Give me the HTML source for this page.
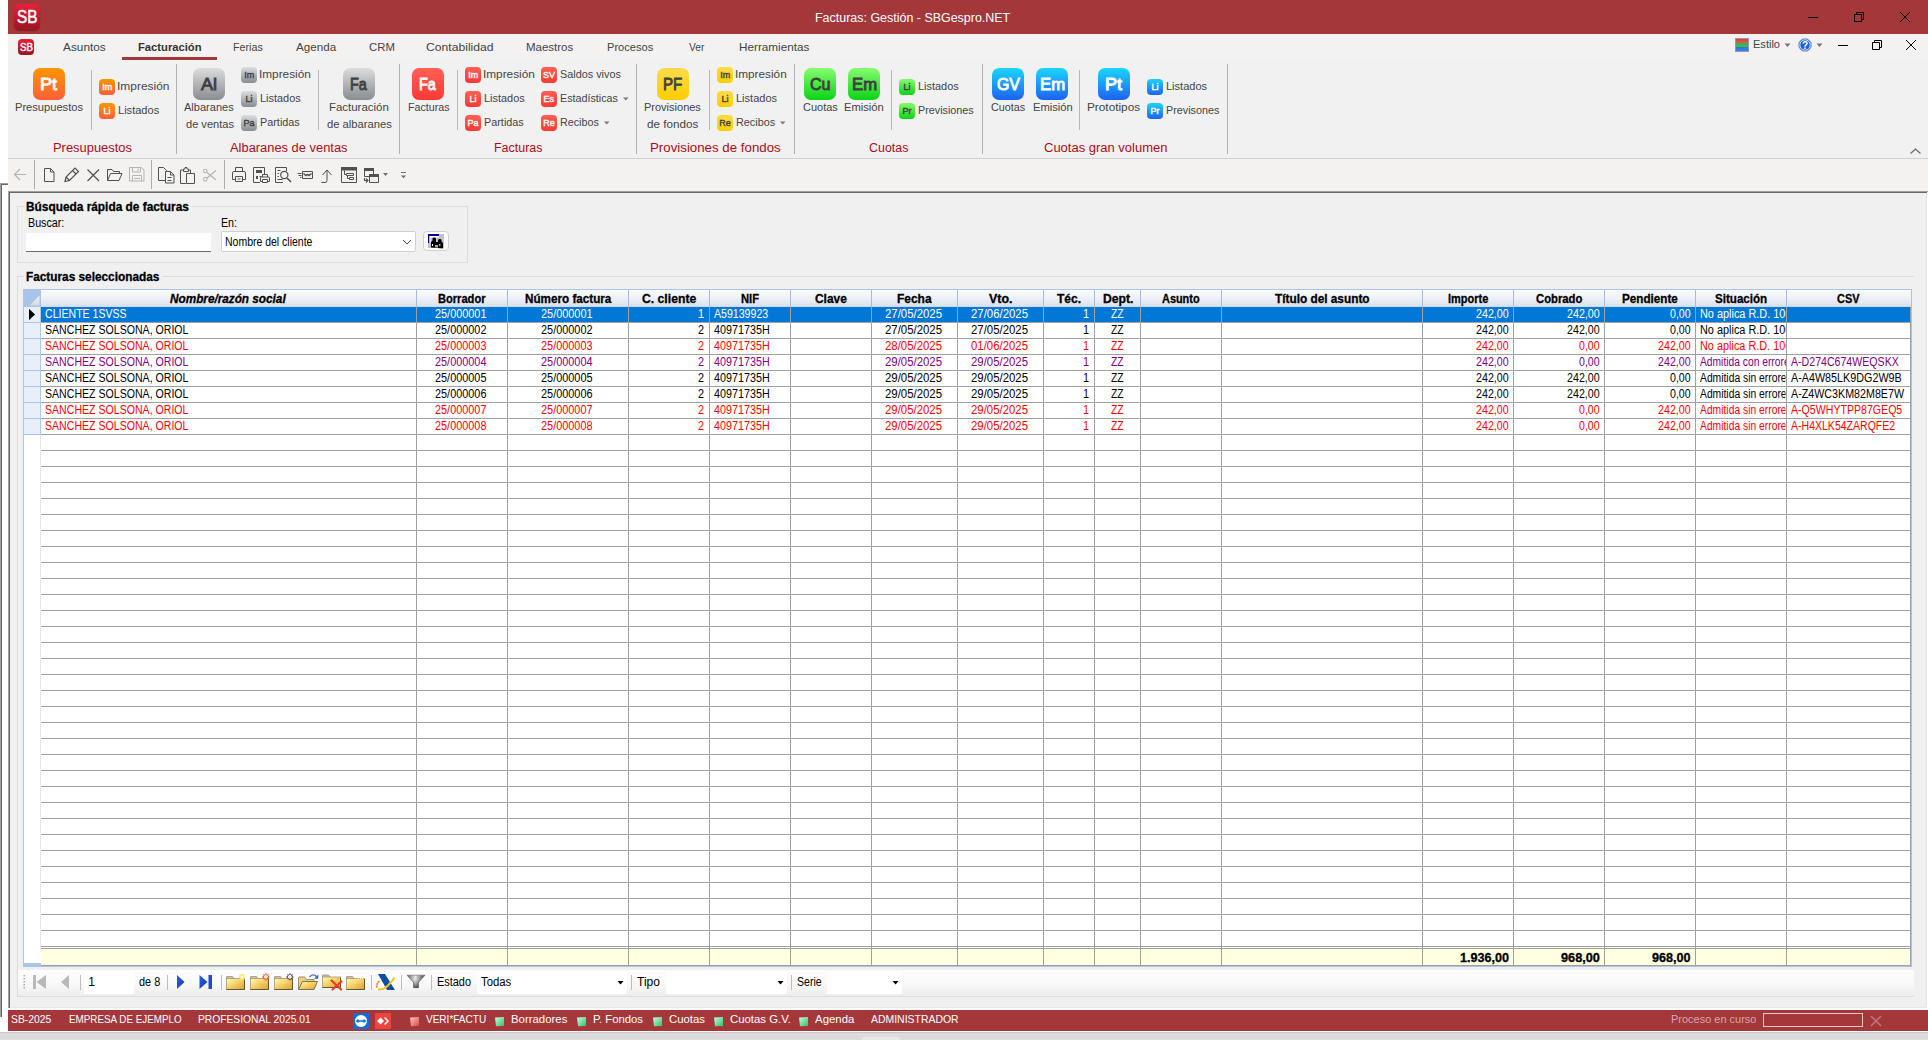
<!DOCTYPE html>
<html lang="es"><head><meta charset="utf-8"><title>Facturas: Gestión - SBGespro.NET</title>
<style>
html,body{margin:0;padding:0}
html{width:1928px;height:1040px;overflow:hidden}
body{width:1928px;height:1040px;position:relative;overflow:hidden;background:#fff;font-family:"Liberation Sans", sans-serif;}
.a{position:absolute;box-sizing:border-box}
.t{position:absolute;white-space:nowrap;line-height:16px;height:16px;transform-origin:0 50%;font-family:"Liberation Sans", sans-serif;font-size:11px}

.bi{position:absolute;width:32px;height:32px;border-radius:7px;top:68px}
.si{position:absolute;width:16px;height:16px;border-radius:4px}
.g-or{background:linear-gradient(#ff9500,#ff5e3a)}
.g-gy{background:linear-gradient(#dbddde,#898c90)}
.g-rd{background:linear-gradient(#ff6055,#ff3834)}
.g-yl{background:linear-gradient(#ffdb4c,#ffcd02)}
.g-gn{background:linear-gradient(#87fc70,#0bd318)}
.g-bl{background:linear-gradient(#1ad6fd,#1d62f0)}
.vs{position:absolute;width:1px;background:#b3b0ad}
.vi{position:absolute;width:1px;background:#b9b6b3;top:70px;height:60px}
svg{position:absolute;overflow:visible}

</style></head><body>
<div class="a" style="left:0px;top:183px;width:8px;height:1px;background:#a0a0a0;"></div>
<div class="a" style="left:1px;top:184px;width:7px;height:1px;background:#696969;"></div>
<div class="a" style="left:0px;top:183px;width:1px;height:834px;background:#a0a0a0;"></div>
<div class="a" style="left:1px;top:184px;width:1px;height:833px;background:#696969;"></div>
<div class="a" style="left:0px;top:1032px;width:1928px;height:8px;background:#dcdcdc;"></div>
<div class="a" style="left:0px;top:1032px;width:1928px;height:1px;background:#c6c6c6;"></div>
<div class="a" style="left:8px;top:1031px;width:1920px;height:1px;background:#ffffff;"></div>
<div class="a" style="left:862px;top:1037px;width:38px;height:3px;background:#e9e9e9;border-radius:3px 3px 0 0"></div>
<div class="a" style="left:8px;top:0px;width:1920px;height:34px;background:#a4373a;"></div>
<div class="a" style="left:8px;top:34px;width:1920px;height:157px;background:#f3f2f1;"></div>
<div class="a" style="left:8px;top:59px;width:1920px;height:99px;background:#f1f1f1;"></div>
<div class="a" style="left:8px;top:158px;width:1920px;height:1px;background:#d0d0d0;"></div>
<div class="a" style="left:8px;top:191px;width:1920px;height:817px;background:#f0f0f0;"></div>
<div class="a" style="left:8px;top:191px;width:1920px;height:1px;background:#a0a0a0;"></div>
<div class="a" style="left:8px;top:191px;width:1px;height:817px;background:#a0a0a0;"></div>
<div class="a" style="left:9px;top:192px;width:1918px;height:1px;background:#696969;"></div>
<div class="a" style="left:9px;top:192px;width:1px;height:816px;background:#696969;"></div>
<div class="a" style="left:1926px;top:193px;width:1px;height:815px;background:#e3e3e3;"></div>
<div class="a" style="left:1927px;top:192px;width:1px;height:816px;background:#ffffff;"></div>
<div class="a" style="left:10px;top:1007px;width:1917px;height:1px;background:#e6e6e6;"></div>
<div class="a" style="left:8px;top:1008px;width:1920px;height:2px;background:#ffffff;"></div>
<div class="a" style="left:8px;top:1010px;width:1920px;height:21px;background:#a4373a;"></div>
<div class="a" style="left:14px;top:4px;width:26px;height:26px;border-radius:5px;background:linear-gradient(#e8213b,#9c1422);box-shadow:0 1px 1px rgba(60,0,0,.4)"></div>
<svg style="left:1800px;top:8px" width="120" height="20" viewBox="1800 8 120 20" fill="none" stroke="#000" stroke-width="1"><path d="M1808 17.5H1818"/><path d="M1854.5 14.5h7v7h-7z"/><path d="M1856.5 14.5v-2h7v7h-2"/><path d="M1900 12L1910 22M1910 12L1900 22"/></svg>
<div class="a" style="left:18px;top:39px;width:16px;height:16px;border-radius:4px;background:linear-gradient(#e8213b,#9c1422)"></div>
<div class="a" style="left:122px;top:57px;width:95px;height:3px;background:#a4373a;"></div>
<div class="a" style="left:1735px;top:38px;width:14px;height:14px;border:1px solid #8a9bb5;background:linear-gradient(#e03c31 0,#e35d4f 33%,#2fb344 33%,#39c04c 66%,#2f6fe0 66%,#3b82f0 100%)"></div>
<svg style="left:1780px;top:36px" width="148" height="20" viewBox="1780 36 148 20"><path d="M1784.5 43.5h6l-3 3.5z" fill="#777"/><path d="M1816.5 43.5h6l-3 3.5z" fill="#777"/><circle cx="1805" cy="45" r="6.5" fill="#1f5fd0" stroke="#9db8ea" stroke-width="1"/><circle cx="1805" cy="45" r="5.2" fill="none" stroke="#fff" stroke-width="0.8"/><g fill="none" stroke="#000" stroke-width="1"><path d="M1838 45.5H1848"/><path d="M1872.5 42.5h7v7h-7z"/><path d="M1874.5 42.5v-2h7v7h-2"/><path d="M1906 40L1916 50M1916 40L1906 50"/></g></svg>
<svg style="left:1908px;top:147px" width="16" height="10" viewBox="1908 147 16 10"><path d="M1910.5 153.5l5-4.5l5 4.5" fill="none" stroke="#666" stroke-width="1.2"/></svg>
<div class="bi g-or" style="left:33px"></div>
<div class="vi" style="left:91px"></div>
<div class="si g-or" style="left:99px;top:79px"></div>
<div class="si g-or" style="left:99px;top:103px"></div>
<div class="vs" style="left:176px;top:64px;height:90px"></div>
<div class="bi g-gy" style="left:193px"></div>
<div class="si g-gy" style="left:241px;top:67px"></div>
<div class="si g-gy" style="left:241px;top:91px"></div>
<div class="si g-gy" style="left:241px;top:115px"></div>
<div class="vi" style="left:318px"></div>
<div class="bi g-gy" style="left:343px"></div>
<div class="vs" style="left:399px;top:64px;height:90px"></div>
<div class="bi g-rd" style="left:412px"></div>
<div class="vi" style="left:457px"></div>
<div class="si g-rd" style="left:465px;top:67px"></div>
<div class="si g-rd" style="left:465px;top:91px"></div>
<div class="si g-rd" style="left:465px;top:115px"></div>
<div class="si g-rd" style="left:541px;top:67px"></div>
<div class="si g-rd" style="left:541px;top:91px"></div>
<svg style="left:623px;top:97px" width="6" height="4" viewBox="0 0 6 4"><path d="M0 0.5h5.5l-2.75 3z" fill="#777"/></svg>
<div class="si g-rd" style="left:541px;top:115px"></div>
<svg style="left:604px;top:121px" width="6" height="4" viewBox="0 0 6 4"><path d="M0 0.5h5.5l-2.75 3z" fill="#777"/></svg>
<div class="vs" style="left:636px;top:64px;height:90px"></div>
<div class="bi g-yl" style="left:657px"></div>
<div class="vi" style="left:709px"></div>
<div class="si g-yl" style="left:717px;top:67px"></div>
<div class="si g-yl" style="left:717px;top:91px"></div>
<div class="si g-yl" style="left:717px;top:115px"></div>
<svg style="left:780px;top:121px" width="6" height="4" viewBox="0 0 6 4"><path d="M0 0.5h5.5l-2.75 3z" fill="#777"/></svg>
<div class="vs" style="left:794px;top:64px;height:90px"></div>
<div class="bi g-gn" style="left:804px"></div>
<div class="bi g-gn" style="left:848px"></div>
<div class="vi" style="left:891px"></div>
<div class="si g-gn" style="left:899px;top:79px"></div>
<div class="si g-gn" style="left:899px;top:103px"></div>
<div class="vs" style="left:982px;top:64px;height:90px"></div>
<div class="bi g-bl" style="left:992px"></div>
<div class="bi g-bl" style="left:1036px"></div>
<div class="vi" style="left:1079px"></div>
<div class="bi g-bl" style="left:1098px"></div>
<div class="si g-bl" style="left:1147px;top:79px"></div>
<div class="si g-bl" style="left:1147px;top:103px"></div>
<div class="vs" style="left:1227px;top:64px;height:90px"></div>
<svg style="left:8px;top:159px" width="420" height="32" viewBox="8 159 420 32"><path d="M34.5 160V189" stroke="#aeaba8" stroke-width="1"/><path d="M151.5 160V189" stroke="#aeaba8" stroke-width="1"/><path d="M224.5 160V189" stroke="#aeaba8" stroke-width="1"/><path d="M14.5 174.5H26 M20 169L14.5 174.5L20 180" stroke="#b4b4b4" fill="none" stroke-width="1.2" /><path d="M44.5 168.5h6l3.5 3.5v9.5h-9.5z M50.5 168.5v3.5h3.5" stroke="#505050" fill="none" stroke-width="1" /><path d="M65 181.5l1-4.5l9-9l3.5 3.5l-9 9z M72.5 170.5l3.5 3.5 M66 177l3.5 3.5" stroke="#505050" fill="none" stroke-width="1.2" /><path d="M87.5 169.5L99 181 M99 169.5L87.5 181" stroke="#505050" fill="none" stroke-width="1.2" /><path d="M107.5 180.5v-11h4.5l1.5 2h6v2.5 M107.5 180.5l3-7h11.5l-3 7z" stroke="#505050" fill="none" stroke-width="1" /><path d="M129.5 167.5h12l2.5 2.5v11h-14.5z M132.5 167.5v4.5h8v-4.5 M132.5 181v-5.5h9v5.5 M134 178.5h6 M138 168.5v2.5" stroke="#b4b4b4" fill="none" stroke-width="1" /><path d="M165 180.5h-6.5v-13h5l3 3v1" stroke="#505050" fill="none" stroke-width="1" /><path d="M165.5 171.5h5l3.5 3.5v8h-8.5z M170.5 171.5v3.5h3.5 M167.5 177.5h4 M167.5 180.5h4" stroke="#505050" fill="none" stroke-width="1" /><path d="M186 183.5h-5.500v-13.5h2.500 M188 170h2.500v3 M183.500 171.500v-2.500h1.500v-1.500h2v1.500h1.500v2.500z" stroke="#505050" fill="none" stroke-width="1" /><path d="M186.500 173.500h8v10h-8z" stroke="#505050" fill="none" stroke-width="1" /><path d="M207 172.500L216 180 M207 178L216 170.500" stroke="#b4b4b4" fill="none" stroke-width="1.2" /><circle cx="205.3" cy="171" r="1.8" fill="none" stroke="#b4b4b4" stroke-width="1.1"/><circle cx="205.3" cy="179.300" r="1.8" fill="none" stroke="#b4b4b4" stroke-width="1.1"/><path d="M235.500 171.500v-4h7v4 M235.500 179.500h-3v-6.500a1.500 1.500 0 0 1 1.500 -1.500h10a1.500 1.500 0 0 1 1.500 1.500v6.500h-3 M235.500 176.500h7v5h-7z M237.500 179h3" stroke="#505050" fill="none" stroke-width="1" /><path d="M260 182.500h-6.500v-15h11v7" stroke="#505050" fill="none" stroke-width="1" /><path d="M256 170h6v3h-6z" stroke="none" fill="#505050" stroke-width="1" /><path d="M256 176h2v3h-2z" stroke="none" fill="#505050" stroke-width="1" /><path d="M259.500 176.500h2" stroke="#505050" fill="none" stroke-width="1" /><path d="M262.500 177v-2.500h5v2.500 M262.500 181.500h-2v-3.500a1 1 0 0 1 1 -1h7a1 1 0 0 1 1 1v3.500h-2 M262.500 179.500h5v3h-5z" stroke="#505050" fill="none" stroke-width="1" /><path d="M283 182.500h-7.500v-15h11v3.500" stroke="#505050" fill="none" stroke-width="1" /><path d="M277.500 170.500h3 M277.500 173.500h1.500 M277.500 176.500h1.500 M277.500 179.500h5" stroke="#505050" fill="none" stroke-width="1" /><circle cx="284.300" cy="175" r="3.600" fill="none" stroke="#505050" stroke-width="1.200"/><path d="M287 178L291 182" stroke="#505050" fill="none" stroke-width="1.6" /><path d="M302.500 171.500h10v7h-10z" stroke="#505050" fill="none" stroke-width="1" /><path d="M303.500 173.500l2.500 2l1.500 -1l1.500 1l2.500 -2" stroke="#505050" fill="none" stroke-width="1.5" /><path d="M297.500 173.500h4 M298.500 175.500h3 M300 177.500h1.500" stroke="#505050" fill="none" stroke-width="1" /><path d="M321.500 182.500h3.500a2 2 0 0 0 2 -2v-10 M322.500 175l4.500 -5l4.500 5" stroke="#505050" fill="none" stroke-width="1" /><path d="M341.500 167.500h15v15h-15z" stroke="#505050" fill="none" stroke-width="1" /><path d="M341 167h16v3.500h-16z" stroke="none" fill="#505050" stroke-width="1" /><path d="M344.500 170.500v4h2 M346.500 173.500h7v2h-7z M347.500 175.500v3h2 M349.500 177.500h4v2h-4z" stroke="#505050" fill="none" stroke-width="1" /><path d="M364.500 168.500h9v8h-9z" stroke="#505050" fill="none" stroke-width="1" /><path d="M364 168h10v3h-10z" stroke="none" fill="#505050" stroke-width="1" /><path d="M369.500 174.500h9v8h-9z" stroke="#505050" fill="#f3f2f1" stroke-width="1" /><path d="M369 174h10v3h-10z" stroke="none" fill="#505050" stroke-width="1" /><path d="M364.500 178v2.500h3 M366 178.500l2 2l-2 2" stroke="#505050" fill="none" stroke-width="1.1" /><path d="M383 173h5l-2.500 3z" stroke="none" fill="#6e6e6e" stroke-width="1" /><path d="M401 172.500h5" stroke="#6e6e6e" fill="none" stroke-width="1" /><path d="M401 175.500h5l-2.500 2.800z" stroke="none" fill="#6e6e6e" stroke-width="1" /></svg>
<div class="a" style="left:17px;top:206px;width:451px;height:57px;border:1px solid #dcdcdc"></div>
<div class="a" style="left:24px;top:203px;width:168px;height:10px;background:#f0f0f0;"></div>
<div class="a" style="left:26px;top:233px;width:185px;height:19px;background:#fff;border-bottom:1px solid #6e6e6e"></div>
<div class="a" style="left:221px;top:231px;width:195px;height:21px;background:#fff;border:1px solid #cfcfcf;border-radius:2px"></div>
<svg style="left:402px;top:238px" width="10" height="8" viewBox="402 238 10 8"><path d="M403 240l4 4l4 -4" fill="none" stroke="#444" stroke-width="1"/></svg>
<div class="a" style="left:423px;top:231px;width:26px;height:20px;background:#fdfdfd;border:1px solid #cfcfcf;border-radius:4px"></div>
<svg style="left:428px;top:234px" width="16" height="14" viewBox="428 234 16 14"><rect x="428" y="234" width="16" height="14" fill="#c0c0c0"/><rect x="429" y="236" width="10" height="7" fill="#fff"/><rect x="430.500" y="237.500" width="8.500" height="5.500" fill="#c0c0c0"/><rect x="428" y="234" width="11" height="2" fill="#00008b"/><rect x="428" y="234" width="1.300" height="9" fill="#00008b"/><path d="M431 247.500v-5.500l1.500 -1.500v-2l1 -1h1.500l1 1v3.500h2v-2l1 -1h1.500l1 1v1.500l1.500 1.500v5.500z" fill="#000"/><rect x="435" y="245" width="3" height="2.500" fill="#b5b52a"/><rect x="432" y="244" width="1" height="2" fill="#fff"/><rect x="439.300" y="244" width="1" height="2" fill="#fff"/></svg>
<div class="a" style="left:17px;top:276px;width:1897px;height:721px;border:1px solid #dcdcdc;border-right:none"></div>
<div class="a" style="left:24px;top:272px;width:138px;height:10px;background:#f0f0f0;"></div>
<div class="a" style="left:23px;top:289px;width:1889px;height:678px;background:#fff;border:1px solid #a9c4e9"></div>
<div class="a" style="left:41px;top:290px;width:1870px;height:17px;background:linear-gradient(#fafcfe,#eef2f8 45%,#dde3ee 90%,#cfd6e3)"></div>
<div class="a" style="left:24px;top:290px;width:17px;height:17px;background:#a9c4e9"></div>
<svg style="left:24px;top:290px" width="17" height="17" viewBox="0 0 17 17"><defs><linearGradient id="cg" x1="0" y1="0" x2="0" y2="1"><stop offset="0" stop-color="#f4f4f4"/><stop offset="1" stop-color="#d8d8d8"/></linearGradient></defs><path d="M15.500 5.500v10h-10z" fill="url(#cg)"/></svg>
<div class="a" style="left:416px;top:290px;width:1px;height:17px;background:#a6badf;"></div>
<div class="a" style="left:507px;top:290px;width:1px;height:17px;background:#a6badf;"></div>
<div class="a" style="left:628px;top:290px;width:1px;height:17px;background:#a6badf;"></div>
<div class="a" style="left:709px;top:290px;width:1px;height:17px;background:#a6badf;"></div>
<div class="a" style="left:790px;top:290px;width:1px;height:17px;background:#a6badf;"></div>
<div class="a" style="left:871px;top:290px;width:1px;height:17px;background:#a6badf;"></div>
<div class="a" style="left:957px;top:290px;width:1px;height:17px;background:#a6badf;"></div>
<div class="a" style="left:1043px;top:290px;width:1px;height:17px;background:#a6badf;"></div>
<div class="a" style="left:1094px;top:290px;width:1px;height:17px;background:#a6badf;"></div>
<div class="a" style="left:1140px;top:290px;width:1px;height:17px;background:#a6badf;"></div>
<div class="a" style="left:1221px;top:290px;width:1px;height:17px;background:#a6badf;"></div>
<div class="a" style="left:1422px;top:290px;width:1px;height:17px;background:#a6badf;"></div>
<div class="a" style="left:1513px;top:290px;width:1px;height:17px;background:#a6badf;"></div>
<div class="a" style="left:1604px;top:290px;width:1px;height:17px;background:#a6badf;"></div>
<div class="a" style="left:1695px;top:290px;width:1px;height:17px;background:#a6badf;"></div>
<div class="a" style="left:1786px;top:290px;width:1px;height:17px;background:#a6badf;"></div>
<div class="a" style="left:41px;top:307px;width:1870px;height:640px;background:repeating-linear-gradient(#fff 0,#fff 15px,#a0a0a0 15px,#a0a0a0 16px)"></div>
<div class="a" style="left:41px;top:307px;width:1870px;height:15px;background:#0078d7;"></div>
<div class="a" style="left:24px;top:307px;width:16px;height:128px;background:repeating-linear-gradient(#e9eff8 0,#e9eff8 15px,#a9c4e9 15px,#a9c4e9 16px)"></div>
<div class="a" style="left:40px;top:307px;width:1px;height:128px;background:#b4c8e6;"></div>
<div class="a" style="left:40px;top:435px;width:1px;height:514px;background:#e6e6e6;"></div>
<svg style="left:28px;top:308px" width="8" height="13" viewBox="0 0 8 13"><path d="M1 0.800L7 6.500L1 12.200z" fill="#000"/></svg>
<div class="a" style="left:41px;top:947px;width:1870px;height:1px;background:#fff;"></div>
<div class="a" style="left:41px;top:948px;width:1870px;height:1px;background:#a0a0a0;"></div>
<div class="a" style="left:41px;top:949px;width:1870px;height:16px;background:#ffffe1;"></div>
<div class="a" style="left:41px;top:965px;width:1870px;height:1px;background:#a0a0a0;"></div>
<div class="a" style="left:24px;top:963px;width:17px;height:3px;background:#a9c4e9;"></div>
<div class="a" style="left:416px;top:307px;width:1px;height:659px;background:#a0a0a0;"></div>
<div class="a" style="left:507px;top:307px;width:1px;height:659px;background:#a0a0a0;"></div>
<div class="a" style="left:628px;top:307px;width:1px;height:659px;background:#a0a0a0;"></div>
<div class="a" style="left:709px;top:307px;width:1px;height:659px;background:#a0a0a0;"></div>
<div class="a" style="left:790px;top:307px;width:1px;height:659px;background:#a0a0a0;"></div>
<div class="a" style="left:871px;top:307px;width:1px;height:659px;background:#a0a0a0;"></div>
<div class="a" style="left:957px;top:307px;width:1px;height:659px;background:#a0a0a0;"></div>
<div class="a" style="left:1043px;top:307px;width:1px;height:659px;background:#a0a0a0;"></div>
<div class="a" style="left:1094px;top:307px;width:1px;height:659px;background:#a0a0a0;"></div>
<div class="a" style="left:1140px;top:307px;width:1px;height:659px;background:#a0a0a0;"></div>
<div class="a" style="left:1221px;top:307px;width:1px;height:659px;background:#a0a0a0;"></div>
<div class="a" style="left:1422px;top:307px;width:1px;height:659px;background:#a0a0a0;"></div>
<div class="a" style="left:1513px;top:307px;width:1px;height:659px;background:#a0a0a0;"></div>
<div class="a" style="left:1604px;top:307px;width:1px;height:659px;background:#a0a0a0;"></div>
<div class="a" style="left:1695px;top:307px;width:1px;height:659px;background:#a0a0a0;"></div>
<div class="a" style="left:1786px;top:307px;width:1px;height:659px;background:#a0a0a0;"></div>
<div class="a" style="left:1910px;top:307px;width:1px;height:659px;background:#a0a0a0;"></div>
<div class="a" style="left:1911px;top:289px;width:1px;height:678px;background:#a9c4e9;"></div>
<div class="a" style="left:18px;top:970px;width:1896px;height:26px;background:linear-gradient(#fdfdfd,#f9f9f9 50%,#ededed)"></div>
<div class="a" style="left:84px;top:971px;width:50px;height:23px;background:#fff;"></div>
<div class="a" style="left:477px;top:972px;width:150px;height:22px;background:#fff;"></div>
<div class="a" style="left:666px;top:972px;width:121px;height:22px;background:#fff;"></div>
<div class="a" style="left:827px;top:972px;width:75px;height:22px;background:#fff;"></div>
<svg style="left:18px;top:970px" width="900" height="26" viewBox="18 970 900 26"><rect x="23.500" y="975" width="1.500" height="1.500" fill="#a8a8a8"/><rect x="23.500" y="978" width="1.500" height="1.500" fill="#a8a8a8"/><rect x="23.500" y="981" width="1.500" height="1.500" fill="#a8a8a8"/><rect x="23.500" y="984" width="1.500" height="1.500" fill="#a8a8a8"/><rect x="23.500" y="987" width="1.500" height="1.500" fill="#a8a8a8"/><path d="M80.5 975V990" stroke="#bdbdbd" stroke-width="1"/><path d="M167.5 975V990" stroke="#bdbdbd" stroke-width="1"/><path d="M221.5 975V990" stroke="#bdbdbd" stroke-width="1"/><path d="M371.5 975V990" stroke="#bdbdbd" stroke-width="1"/><path d="M401.5 975V990" stroke="#bdbdbd" stroke-width="1"/><path d="M431.5 975V990" stroke="#bdbdbd" stroke-width="1"/><path d="M631.5 975V990" stroke="#bdbdbd" stroke-width="1"/><path d="M791.5 975V990" stroke="#bdbdbd" stroke-width="1"/><rect x="33" y="975" width="3" height="14" fill="#b9b9b9"/><path d="M46 975v14l-9.500 -7z" stroke="none" fill="#b9b9b9" stroke-width="1" /><path d="M69 975v14l-8 -7z" stroke="none" fill="#b9b9b9" stroke-width="1" /><defs><linearGradient id="nb" x1="0" y1="0" x2="1" y2="1"><stop offset="0" stop-color="#2a5fe0"/><stop offset="1" stop-color="#1838b0"/></linearGradient></defs><path d="M177 975v14l7.500 -7z" stroke="none" fill="url(#nb)" stroke-width="1" /><path d="M199.500 975v14l8 -7z" stroke="none" fill="url(#nb)" stroke-width="1" /><rect x="208.500" y="975" width="3.500" height="14" fill="#2149c8"/><defs><linearGradient id="fo" x1="0" y1="0" x2="1" y2="1"><stop offset="0" stop-color="#fff6c8"/><stop offset="0.45" stop-color="#f5d56c"/><stop offset="1" stop-color="#d99f2e"/></linearGradient></defs><path d="M226.5 979v-2q0 -0.500 0.500 -0.500h5.500l2 2.500z" fill="#cbc3a2" stroke="#9a9378" stroke-width="0.800"/><rect x="226.5" y="978.5" width="18" height="11" fill="url(#fo)" stroke="#a89a62" stroke-width="0.800"/><path d="M226.5 989.5h18v-10.500" fill="none" stroke="#5f583f" stroke-width="1"/><path d="M250.5 979v-2q0 -0.500 0.500 -0.500h5.500l2 2.500z" fill="#cbc3a2" stroke="#9a9378" stroke-width="0.800"/><rect x="250.5" y="978.5" width="18" height="11" fill="url(#fo)" stroke="#a89a62" stroke-width="0.800"/><path d="M250.5 989.5h18v-10.500" fill="none" stroke="#5f583f" stroke-width="1"/><path d="M274.5 979v-2q0 -0.500 0.500 -0.500h5.500l2 2.500z" fill="#cbc3a2" stroke="#9a9378" stroke-width="0.800"/><rect x="274.5" y="978.5" width="18" height="11" fill="url(#fo)" stroke="#a89a62" stroke-width="0.800"/><path d="M274.5 989.5h18v-10.500" fill="none" stroke="#5f583f" stroke-width="1"/><path d="M346.5 979v-2q0 -0.500 0.500 -0.500h5.500l2 2.500z" fill="#cbc3a2" stroke="#9a9378" stroke-width="0.800"/><rect x="346.5" y="978.5" width="18" height="11" fill="url(#fo)" stroke="#a89a62" stroke-width="0.800"/><path d="M346.5 989.5h18v-10.500" fill="none" stroke="#5f583f" stroke-width="1"/><path d="M242 973.500v7M238.500 977h7M239.500 974.500l5 5M244.500 974.500l-5 5" stroke="#f6df55" stroke-width="1.200"/><rect x="240.500" y="975.500" width="3" height="3" fill="#fffbe0"/><path d="M266 973.500v7M262.500 977h7M263.500 974.500l5 5M268.500 974.500l-5 5" stroke="#e6352b" stroke-width="1.300" stroke-dasharray="1.600 1"/><rect x="264.500" y="975.500" width="2.500" height="3" fill="#fff1b0"/><path d="M290 973.500v7M286.500 977h7M287.500 974.500l5 5M292.500 974.500l-5 5" stroke="#4a2360" stroke-width="1.300" stroke-dasharray="1.600 1"/><rect x="288.500" y="975.500" width="2.500" height="3" fill="#fff1b0"/><path d="M358 978.500h1M360 978.500h1M362 978.500h1" stroke="#fff3bd" stroke-width="1"/><path d="M298.500 989.500v-12q0 -0.500 0.500 -0.500h5.500l2 2.500h7.500v3" fill="#ecd07a" stroke="#8d8668" stroke-width="0.900"/><path d="M298.500 989.500l4 -8h15l-3.500 8z" fill="url(#fo)" stroke="#6f6748" stroke-width="0.900"/><path d="M309.500 977q3.500 -4 7 -0.500" fill="none" stroke="#4a6fb5" stroke-width="1.400"/><path d="M318.300 974.500v4.300h-4.300z" fill="#3f64ad"/><path d="M322.500 977.500v-2q0 -0.500 0.500 -0.500h5.500l2 2.500z" fill="#cbc3a2" stroke="#9a9378" stroke-width="0.800"/><rect x="322.500" y="977" width="18" height="10.500" fill="url(#fo)" stroke="#a89a62" stroke-width="0.800"/><path d="M322.500 987.500h18v-10" fill="none" stroke="#5f583f" stroke-width="1"/><path d="M331.500 980.500l9.500 9M341.500 981.500l-9 8" stroke="#f03a22" stroke-width="2.200" stroke-linecap="round"/><rect x="376" y="973" width="20" height="18" fill="#fff"/><path d="M378 974h7l10 16h-8z" fill="#0b4ea2"/><path d="M378 989.500q6 0.500 10.500 -4.500t6 -7.500" fill="none" stroke="#f0c030" stroke-width="2"/><path d="M377 987.500q-1.200 -3.500 2.800 -7" fill="none" stroke="#f07028" stroke-width="1.600" stroke-dasharray="2 0.600"/><defs><linearGradient id="fg" x1="0" y1="0" x2="1" y2="0"><stop offset="0" stop-color="#555"/><stop offset="0.45" stop-color="#e8e8e8"/><stop offset="1" stop-color="#3c3c3c"/></linearGradient></defs><path d="M407 975.200h18l-6.500 7.300v5.200h-5v-5.200z" fill="url(#fg)" stroke="#666" stroke-width="0.600"/><linearGradient id="fv" x1="0" y1="0" x2="0" y2="1"><stop offset="0.350" stop-color="#000" stop-opacity="0"/><stop offset="1" stop-color="#000" stop-opacity="0.600"/></linearGradient><path d="M407 975.200h18l-6.500 7.300v5.200h-5v-5.200z" fill="url(#fv)"/><path d="M617.5 981h6l-3 3.500z" stroke="none" fill="#000" stroke-width="1" /><path d="M777.5 981h6l-3 3.500z" stroke="none" fill="#000" stroke-width="1" /><path d="M892.5 981h6l-3 3.500z" stroke="none" fill="#000" stroke-width="1" /></svg>
<div class="a" style="left:1763px;top:1013px;width:100px;height:14px;border:1px solid #e6c9ca"></div>
<svg style="left:8px;top:1010px" width="1920" height="21" viewBox="8 1010 1920 21"><rect x="353" y="1013" width="16" height="16" fill="#0e6fd8"/><circle cx="361" cy="1021" r="6" fill="#fff"/><path d="M355.500 1021l3 -2.300v1.500h5v-1.500l3 2.300l-3 2.300v-1.500h-5v1.500z" fill="#0e6fd8"/><rect x="375" y="1013" width="16" height="16" fill="#ef443b"/><path d="M377 1021l3.500 -3.500l3.500 3.500l-3.500 3.500z" fill="#fff"/><path d="M384.500 1017.500l3.500 3.500l-3.500 3.500" fill="none" stroke="#fff" stroke-width="1.500"/><defs><linearGradient id="sq1" x1="0" y1="0" x2="1" y2="1"><stop offset="0" stop-color="#ffc9c4"/><stop offset="1" stop-color="#d9483f"/></linearGradient><linearGradient id="sq2" x1="0" y1="0" x2="1" y2="1"><stop offset="0" stop-color="#c8ffdf"/><stop offset="1" stop-color="#2fbf6e"/></linearGradient></defs><path d="M410 1017.500l9 -0.500v9l-8 0.300z" fill="url(#sq1)"/><path d="M495 1017.500l9 -0.500v9l-8 0.300z" fill="url(#sq2)"/><path d="M577 1017.500l9 -0.500v9l-8 0.300z" fill="url(#sq2)"/><path d="M653 1017.500l9 -0.500v9l-8 0.300z" fill="url(#sq2)"/><path d="M714 1017.500l9 -0.500v9l-8 0.300z" fill="url(#sq2)"/><path d="M799 1017.500l9 -0.500v9l-8 0.300z" fill="url(#sq2)"/><path d="M1871 1016l10 10M1881 1016l-10 10" stroke="#b9787a" stroke-width="1.600"/></svg>
<span class="t" style="font-size:18px;color:#fff;-webkit-text-stroke:0.5px;transform:scaleX(0.8540);left:17.00px;top:9.00px;">SB</span>
<span class="t" style="font-size:12.5px;color:#fff;transform:scaleX(0.9966);left:815.40px;top:10.00px;">Facturas: Gestión - SBGespro.NET</span>
<span class="t" style="font-size:10px;color:#fff;-webkit-text-stroke:0.4px;transform:scaleX(0.9729);left:20.00px;top:40.00px;">SB</span>
<span class="t" style="font-size:11.5px;color:#444444;transform:scaleX(1.0286);left:63.00px;top:39.00px;">Asuntos</span>
<span class="t" style="font-size:11.5px;color:#333;font-weight:700;transform:scaleX(0.9746);left:137.50px;top:39.00px;">Facturación</span>
<span class="t" style="font-size:11.5px;color:#444444;transform:scaleX(0.9317);left:233.00px;top:39.00px;">Ferias</span>
<span class="t" style="font-size:11.5px;color:#444444;transform:scaleX(1.0123);left:296.25px;top:39.00px;">Agenda</span>
<span class="t" style="font-size:11.5px;color:#444444;transform:scaleX(0.9859);left:368.50px;top:39.00px;">CRM</span>
<span class="t" style="font-size:11.5px;color:#444444;transform:scaleX(1.0568);left:425.60px;top:39.00px;">Contabilidad</span>
<span class="t" style="font-size:11.5px;color:#444444;transform:scaleX(0.9991);left:526.25px;top:39.00px;">Maestros</span>
<span class="t" style="font-size:11.5px;color:#444444;transform:scaleX(0.9650);left:607.25px;top:39.00px;">Procesos</span>
<span class="t" style="font-size:11.5px;color:#444444;transform:scaleX(0.8892);left:688.50px;top:39.00px;">Ver</span>
<span class="t" style="font-size:11.5px;color:#444444;transform:scaleX(1.0192);left:739.40px;top:39.00px;">Herramientas</span>
<span class="t" style="font-size:11.5px;color:#444444;transform:scaleX(0.9594);left:1753.40px;top:36.00px;">Estilo</span>
<span class="t" style="font-size:10px;color:#fff;font-weight:700;transform:scaleX(1.0000);left:1802.00px;top:38.00px;">?</span>
<span class="t" style="font-size:16.5px;color:#fff;-webkit-text-stroke:0.85px;transform:scaleX(1.0929);left:40.01px;top:76.00px;">Pt</span>
<span class="t" style="font-size:11.5px;color:#444444;transform:scaleX(0.9671);left:15.25px;top:99.00px;">Presupuestos</span>
<span class="t" style="font-size:9px;color:#fff;-webkit-text-stroke:0.4px;transform:scaleX(1.0000);left:102.25px;top:79.00px;">Im</span>
<span class="t" style="font-size:11.5px;color:#444444;transform:scaleX(1.0388);left:116.96px;top:78.00px;">Impresión</span>
<span class="t" style="font-size:9px;color:#fff;-webkit-text-stroke:0.4px;transform:scaleX(1.0000);left:103.50px;top:103.00px;">Li</span>
<span class="t" style="font-size:11.5px;color:#444444;transform:scaleX(0.9609);left:118.00px;top:102.00px;">Listados</span>
<span class="t" style="font-size:12.5px;color:#ae0a18;transform:scaleX(1.0335);left:53.07px;top:140.00px;">Presupuestos</span>
<span class="t" style="font-size:16.5px;color:#404040;-webkit-text-stroke:0.85px;transform:scaleX(1.1000);left:201.35px;top:76.00px;">Al</span>
<span class="t" style="font-size:11.5px;color:#444444;transform:scaleX(0.9609);left:184.40px;top:99.00px;">Albaranes</span>
<span class="t" style="font-size:11.5px;color:#444444;transform:scaleX(0.9607);left:185.60px;top:116.00px;">de ventas</span>
<span class="t" style="font-size:9px;color:#404040;-webkit-text-stroke:0.4px;transform:scaleX(1.0000);left:244.25px;top:67.00px;">Im</span>
<span class="t" style="font-size:11.5px;color:#444444;transform:scaleX(1.0255);left:259.22px;top:66.00px;">Impresión</span>
<span class="t" style="font-size:9px;color:#404040;-webkit-text-stroke:0.4px;transform:scaleX(1.0000);left:245.50px;top:91.00px;">Li</span>
<span class="t" style="font-size:11.5px;color:#444444;transform:scaleX(0.9517);left:260.25px;top:90.00px;">Listados</span>
<span class="t" style="font-size:9px;color:#404040;-webkit-text-stroke:0.4px;transform:scaleX(1.0000);left:243.50px;top:115.00px;">Pa</span>
<span class="t" style="font-size:11.5px;color:#444444;transform:scaleX(0.9426);left:260.25px;top:114.00px;">Partidas</span>
<span class="t" style="font-size:16.5px;color:#404040;-webkit-text-stroke:0.85px;transform:scaleX(0.8753);left:350.07px;top:76.00px;">Fa</span>
<span class="t" style="font-size:11.5px;color:#444444;transform:scaleX(0.9943);left:329.40px;top:99.00px;">Facturación</span>
<span class="t" style="font-size:11.5px;color:#444444;transform:scaleX(0.9738);left:326.50px;top:116.00px;">de albaranes</span>
<span class="t" style="font-size:12.5px;color:#ae0a18;transform:scaleX(1.0311);left:230.25px;top:140.00px;">Albaranes de ventas</span>
<span class="t" style="font-size:16.5px;color:#fff;-webkit-text-stroke:0.85px;transform:scaleX(0.8753);left:419.07px;top:76.00px;">Fa</span>
<span class="t" style="font-size:11.5px;color:#444444;transform:scaleX(0.9314);left:407.50px;top:99.00px;">Facturas</span>
<span class="t" style="font-size:9px;color:#fff;-webkit-text-stroke:0.4px;transform:scaleX(1.0000);left:468.25px;top:67.00px;">Im</span>
<span class="t" style="font-size:11.5px;color:#444444;transform:scaleX(1.0255);left:483.37px;top:66.00px;">Impresión</span>
<span class="t" style="font-size:9px;color:#fff;-webkit-text-stroke:0.4px;transform:scaleX(1.0000);left:469.50px;top:91.00px;">Li</span>
<span class="t" style="font-size:11.5px;color:#444444;transform:scaleX(0.9517);left:484.40px;top:90.00px;">Listados</span>
<span class="t" style="font-size:9px;color:#fff;-webkit-text-stroke:0.4px;transform:scaleX(1.0000);left:467.50px;top:115.00px;">Pa</span>
<span class="t" style="font-size:11.5px;color:#444444;transform:scaleX(0.9426);left:484.40px;top:114.00px;">Partidas</span>
<span class="t" style="font-size:9px;color:#fff;-webkit-text-stroke:0.4px;transform:scaleX(1.0000);left:543.00px;top:67.00px;">SV</span>
<span class="t" style="font-size:11.5px;color:#444444;transform:scaleX(0.9428);left:560.40px;top:66.00px;">Saldos vivos</span>
<span class="t" style="font-size:9px;color:#fff;-webkit-text-stroke:0.4px;transform:scaleX(1.0000);left:543.50px;top:91.00px;">Es</span>
<span class="t" style="font-size:11.5px;color:#444444;transform:scaleX(0.9334);left:560.40px;top:90.00px;">Estadísticas</span>
<span class="t" style="font-size:9px;color:#fff;-webkit-text-stroke:0.4px;transform:scaleX(1.0000);left:543.25px;top:115.00px;">Re</span>
<span class="t" style="font-size:11.5px;color:#444444;transform:scaleX(0.9331);left:560.40px;top:114.00px;">Recibos</span>
<span class="t" style="font-size:12.5px;color:#ae0a18;transform:scaleX(0.9973);left:494.25px;top:140.00px;">Facturas</span>
<span class="t" style="font-size:16.5px;color:#404040;-webkit-text-stroke:0.85px;transform:scaleX(0.9123);left:663.26px;top:76.00px;">PF</span>
<span class="t" style="font-size:11.5px;color:#444444;transform:scaleX(0.9566);left:644.40px;top:99.00px;">Provisiones</span>
<span class="t" style="font-size:11.5px;color:#444444;transform:scaleX(1.0145);left:647.00px;top:116.00px;">de fondos</span>
<span class="t" style="font-size:9px;color:#404040;-webkit-text-stroke:0.4px;transform:scaleX(1.0000);left:720.25px;top:67.00px;">Im</span>
<span class="t" style="font-size:11.5px;color:#444444;transform:scaleX(1.0235);left:735.23px;top:66.00px;">Impresión</span>
<span class="t" style="font-size:9px;color:#404040;-webkit-text-stroke:0.4px;transform:scaleX(1.0000);left:721.50px;top:91.00px;">Li</span>
<span class="t" style="font-size:11.5px;color:#444444;transform:scaleX(0.9575);left:736.25px;top:90.00px;">Listados</span>
<span class="t" style="font-size:9px;color:#404040;-webkit-text-stroke:0.4px;transform:scaleX(1.0000);left:719.25px;top:115.00px;">Re</span>
<span class="t" style="font-size:11.5px;color:#444444;transform:scaleX(0.9415);left:736.25px;top:114.00px;">Recibos</span>
<span class="t" style="font-size:12.5px;color:#ae0a18;transform:scaleX(1.0625);left:650.19px;top:140.00px;">Provisiones de fondos</span>
<span class="t" style="font-size:16.5px;color:#404040;-webkit-text-stroke:0.85px;transform:scaleX(0.9753);left:810.10px;top:76.00px;">Cu</span>
<span class="t" style="font-size:11.5px;color:#444444;transform:scaleX(0.9540);left:802.50px;top:99.00px;">Cuotas</span>
<span class="t" style="font-size:16.5px;color:#404040;-webkit-text-stroke:0.85px;transform:scaleX(1.0128);left:851.64px;top:76.00px;">Em</span>
<span class="t" style="font-size:11.5px;color:#444444;transform:scaleX(0.9715);left:844.40px;top:99.00px;">Emisión</span>
<span class="t" style="font-size:9px;color:#404040;-webkit-text-stroke:0.4px;transform:scaleX(1.0000);left:903.50px;top:79.00px;">Li</span>
<span class="t" style="font-size:11.5px;color:#444444;transform:scaleX(0.9517);left:918.40px;top:78.00px;">Listados</span>
<span class="t" style="font-size:9px;color:#404040;-webkit-text-stroke:0.4px;transform:scaleX(1.0000);left:902.50px;top:103.00px;">Pr</span>
<span class="t" style="font-size:11.5px;color:#444444;transform:scaleX(0.9381);left:918.40px;top:102.00px;">Previsiones</span>
<span class="t" style="font-size:12.5px;color:#ae0a18;transform:scaleX(0.9935);left:869.40px;top:140.00px;">Cuotas</span>
<span class="t" style="font-size:16.5px;color:#fff;-webkit-text-stroke:0.85px;transform:scaleX(0.9608);left:996.85px;top:76.00px;">GV</span>
<span class="t" style="font-size:11.5px;color:#444444;transform:scaleX(0.9377);left:990.60px;top:99.00px;">Cuotas</span>
<span class="t" style="font-size:16.5px;color:#fff;-webkit-text-stroke:0.85px;transform:scaleX(1.0128);left:1039.64px;top:76.00px;">Em</span>
<span class="t" style="font-size:11.5px;color:#444444;transform:scaleX(0.9727);left:1032.50px;top:99.00px;">Emisión</span>
<span class="t" style="font-size:16.5px;color:#fff;-webkit-text-stroke:0.85px;transform:scaleX(1.0929);left:1105.01px;top:76.00px;">Pt</span>
<span class="t" style="font-size:11.5px;color:#444444;transform:scaleX(1.0254);left:1087.25px;top:99.00px;">Prototipos</span>
<span class="t" style="font-size:9px;color:#fff;-webkit-text-stroke:0.4px;transform:scaleX(1.0000);left:1151.50px;top:79.00px;">Li</span>
<span class="t" style="font-size:11.5px;color:#444444;transform:scaleX(0.9575);left:1166.25px;top:78.00px;">Listados</span>
<span class="t" style="font-size:9px;color:#fff;-webkit-text-stroke:0.4px;transform:scaleX(1.0000);left:1150.50px;top:103.00px;">Pr</span>
<span class="t" style="font-size:11.5px;color:#444444;transform:scaleX(0.9363);left:1166.25px;top:102.00px;">Previsones</span>
<span class="t" style="font-size:12.5px;color:#ae0a18;transform:scaleX(1.0390);left:1044.00px;top:140.00px;">Cuotas gran volumen</span>
<span class="t" style="font-size:12.3px;color:#000;font-weight:700;-webkit-text-stroke:0.3px;transform:scaleX(0.9648);left:26.00px;top:199.00px;">Búsqueda rápida de facturas</span>
<span class="t" style="font-size:12.3px;color:#000;transform:scaleX(0.8716);left:27.53px;top:215.00px;">Buscar:</span>
<span class="t" style="font-size:12.3px;color:#000;transform:scaleX(0.8685);left:220.63px;top:215.00px;">En:</span>
<span class="t" style="font-size:12.3px;color:#000;transform:scaleX(0.8526);left:224.55px;top:234.00px;">Nombre del cliente</span>
<span class="t" style="font-size:12.3px;color:#000;font-weight:700;-webkit-text-stroke:0.3px;transform:scaleX(0.9610);left:26.25px;top:269.00px;">Facturas seleccionadas</span>
<span class="t" style="font-size:12.3px;color:#000;font-weight:700;-webkit-text-stroke:0.3px;font-style:italic;transform:scaleX(0.9561);left:170.40px;top:291.00px;">Nombre/razón social</span>
<span class="t" style="font-size:12.3px;color:#000;font-weight:700;-webkit-text-stroke:0.3px;transform:scaleX(0.9030);left:438.15px;top:291.00px;">Borrador</span>
<span class="t" style="font-size:12.3px;color:#000;font-weight:700;-webkit-text-stroke:0.3px;transform:scaleX(0.9501);left:524.75px;top:291.00px;">Número factura</span>
<span class="t" style="font-size:12.3px;color:#000;font-weight:700;-webkit-text-stroke:0.3px;transform:scaleX(0.9921);left:641.80px;top:291.00px;">C. cliente</span>
<span class="t" style="font-size:12.3px;color:#000;font-weight:700;-webkit-text-stroke:0.3px;transform:scaleX(0.9115);left:740.75px;top:291.00px;">NIF</span>
<span class="t" style="font-size:12.3px;color:#000;font-weight:700;-webkit-text-stroke:0.3px;transform:scaleX(0.9704);left:815.00px;top:291.00px;">Clave</span>
<span class="t" style="font-size:12.3px;color:#000;font-weight:700;-webkit-text-stroke:0.3px;transform:scaleX(0.9720);left:897.15px;top:291.00px;">Fecha</span>
<span class="t" style="font-size:12.3px;color:#000;font-weight:700;-webkit-text-stroke:0.3px;transform:scaleX(1.0084);left:989.00px;top:291.00px;">Vto.</span>
<span class="t" style="font-size:12.3px;color:#000;font-weight:700;-webkit-text-stroke:0.3px;transform:scaleX(0.9798);left:1057.15px;top:291.00px;">Téc.</span>
<span class="t" style="font-size:12.3px;color:#000;font-weight:700;-webkit-text-stroke:0.3px;transform:scaleX(0.9893);left:1102.50px;top:291.00px;">Dept.</span>
<span class="t" style="font-size:12.3px;color:#000;font-weight:700;-webkit-text-stroke:0.3px;transform:scaleX(0.8871);left:1162.00px;top:291.00px;">Asunto</span>
<span class="t" style="font-size:12.3px;color:#000;font-weight:700;-webkit-text-stroke:0.3px;transform:scaleX(0.9610);left:1274.50px;top:291.00px;">Título del asunto</span>
<span class="t" style="font-size:12.3px;color:#000;font-weight:700;-webkit-text-stroke:0.3px;transform:scaleX(0.8950);left:1447.75px;top:291.00px;">Importe</span>
<span class="t" style="font-size:12.3px;color:#000;font-weight:700;-webkit-text-stroke:0.3px;transform:scaleX(0.9169);left:1535.60px;top:291.00px;">Cobrado</span>
<span class="t" style="font-size:12.3px;color:#000;font-weight:700;-webkit-text-stroke:0.3px;transform:scaleX(0.9504);left:1622.00px;top:291.00px;">Pendiente</span>
<span class="t" style="font-size:12.3px;color:#000;font-weight:700;-webkit-text-stroke:0.3px;transform:scaleX(0.9429);left:1715.15px;top:291.00px;">Situación</span>
<span class="t" style="font-size:12.3px;color:#000;font-weight:700;-webkit-text-stroke:0.3px;transform:scaleX(0.8895);left:1836.90px;top:291.00px;">CSV</span>
<span class="t" style="font-size:12.3px;color:#fff;transform:scaleX(0.8598);left:45.00px;top:306.00px;">CLIENTE 1SVSS</span>
<span class="t" style="font-size:12.3px;color:#fff;transform:scaleX(0.8852);left:435.20px;top:306.00px;">25/000001</span>
<span class="t" style="font-size:12.3px;color:#fff;transform:scaleX(0.8870);left:541.25px;top:306.00px;">25/000001</span>
<span class="t" style="font-size:12.3px;color:#fff;transform:scaleX(0.8850);left:698.10px;top:306.00px;">1</span>
<span class="t" style="font-size:12.3px;color:#fff;transform:scaleX(0.8609);left:714.20px;top:306.00px;">A59139923</span>
<span class="t" style="font-size:12.3px;color:#fff;transform:scaleX(0.9270);left:885.40px;top:306.00px;">27/05/2025</span>
<span class="t" style="font-size:12.3px;color:#fff;transform:scaleX(0.9270);left:971.40px;top:306.00px;">27/06/2025</span>
<span class="t" style="font-size:12.3px;color:#fff;transform:scaleX(0.8850);left:1083.11px;top:306.00px;">1</span>
<span class="t" style="font-size:12.3px;color:#fff;transform:scaleX(0.8381);left:1110.50px;top:306.00px;">ZZ</span>
<span class="t" style="font-size:12.3px;color:#fff;transform:scaleX(0.8684);left:1476.20px;top:306.00px;">242,00</span>
<span class="t" style="font-size:12.3px;color:#fff;transform:scaleX(0.8684);left:1567.20px;top:306.00px;">242,00</span>
<span class="t" style="font-size:12.3px;color:#fff;transform:scaleX(0.8633);left:1670.20px;top:306.00px;">0,00</span>
<span class="t" style="font-size:12.3px;color:#fff;transform:scaleX(0.8850);left:1699.51px;top:306.00px;width:96.72px;overflow:hidden;">No aplica R.D. 100</span>
<span class="t" style="font-size:12.3px;color:#000;transform:scaleX(0.8604);left:45.00px;top:322.00px;">SANCHEZ SOLSONA, ORIOL</span>
<span class="t" style="font-size:12.3px;color:#000;transform:scaleX(0.8852);left:435.20px;top:322.00px;">25/000002</span>
<span class="t" style="font-size:12.3px;color:#000;transform:scaleX(0.8870);left:541.25px;top:322.00px;">25/000002</span>
<span class="t" style="font-size:12.3px;color:#000;transform:scaleX(0.8850);left:698.10px;top:322.00px;">2</span>
<span class="t" style="font-size:12.3px;color:#000;transform:scaleX(0.8770);left:714.20px;top:322.00px;">40971735H</span>
<span class="t" style="font-size:12.3px;color:#000;transform:scaleX(0.9270);left:885.40px;top:322.00px;">27/05/2025</span>
<span class="t" style="font-size:12.3px;color:#000;transform:scaleX(0.9270);left:971.40px;top:322.00px;">27/05/2025</span>
<span class="t" style="font-size:12.3px;color:#000;transform:scaleX(0.8850);left:1083.11px;top:322.00px;">1</span>
<span class="t" style="font-size:12.3px;color:#000;transform:scaleX(0.8381);left:1110.50px;top:322.00px;">ZZ</span>
<span class="t" style="font-size:12.3px;color:#000;transform:scaleX(0.8684);left:1476.20px;top:322.00px;">242,00</span>
<span class="t" style="font-size:12.3px;color:#000;transform:scaleX(0.8684);left:1567.20px;top:322.00px;">242,00</span>
<span class="t" style="font-size:12.3px;color:#000;transform:scaleX(0.8633);left:1670.20px;top:322.00px;">0,00</span>
<span class="t" style="font-size:12.3px;color:#000;transform:scaleX(0.8850);left:1699.51px;top:322.00px;width:96.72px;overflow:hidden;">No aplica R.D. 100</span>
<span class="t" style="font-size:12.3px;color:#ff0000;transform:scaleX(0.8604);left:45.00px;top:338.00px;">SANCHEZ SOLSONA, ORIOL</span>
<span class="t" style="font-size:12.3px;color:#ff0000;transform:scaleX(0.8852);left:435.20px;top:338.00px;">25/000003</span>
<span class="t" style="font-size:12.3px;color:#ff0000;transform:scaleX(0.8870);left:541.25px;top:338.00px;">25/000003</span>
<span class="t" style="font-size:12.3px;color:#ff0000;transform:scaleX(0.8850);left:698.10px;top:338.00px;">2</span>
<span class="t" style="font-size:12.3px;color:#ff0000;transform:scaleX(0.8770);left:714.20px;top:338.00px;">40971735H</span>
<span class="t" style="font-size:12.3px;color:#ff0000;transform:scaleX(0.9270);left:885.40px;top:338.00px;">28/05/2025</span>
<span class="t" style="font-size:12.3px;color:#ff0000;transform:scaleX(0.9270);left:971.40px;top:338.00px;">01/06/2025</span>
<span class="t" style="font-size:12.3px;color:#ff0000;transform:scaleX(0.8850);left:1083.11px;top:338.00px;">1</span>
<span class="t" style="font-size:12.3px;color:#ff0000;transform:scaleX(0.8381);left:1110.50px;top:338.00px;">ZZ</span>
<span class="t" style="font-size:12.3px;color:#ff0000;transform:scaleX(0.8684);left:1476.20px;top:338.00px;">242,00</span>
<span class="t" style="font-size:12.3px;color:#ff0000;transform:scaleX(0.8633);left:1579.20px;top:338.00px;">0,00</span>
<span class="t" style="font-size:12.3px;color:#ff0000;transform:scaleX(0.8684);left:1658.20px;top:338.00px;">242,00</span>
<span class="t" style="font-size:12.3px;color:#ff0000;transform:scaleX(0.8850);left:1699.51px;top:338.00px;width:96.72px;overflow:hidden;">No aplica R.D. 100</span>
<span class="t" style="font-size:12.3px;color:#800080;transform:scaleX(0.8604);left:45.00px;top:354.00px;">SANCHEZ SOLSONA, ORIOL</span>
<span class="t" style="font-size:12.3px;color:#800080;transform:scaleX(0.8852);left:435.20px;top:354.00px;">25/000004</span>
<span class="t" style="font-size:12.3px;color:#800080;transform:scaleX(0.8870);left:541.25px;top:354.00px;">25/000004</span>
<span class="t" style="font-size:12.3px;color:#800080;transform:scaleX(0.8850);left:698.10px;top:354.00px;">2</span>
<span class="t" style="font-size:12.3px;color:#800080;transform:scaleX(0.8770);left:714.20px;top:354.00px;">40971735H</span>
<span class="t" style="font-size:12.3px;color:#800080;transform:scaleX(0.9270);left:885.40px;top:354.00px;">29/05/2025</span>
<span class="t" style="font-size:12.3px;color:#800080;transform:scaleX(0.9270);left:971.40px;top:354.00px;">29/05/2025</span>
<span class="t" style="font-size:12.3px;color:#800080;transform:scaleX(0.8850);left:1083.11px;top:354.00px;">1</span>
<span class="t" style="font-size:12.3px;color:#800080;transform:scaleX(0.8381);left:1110.50px;top:354.00px;">ZZ</span>
<span class="t" style="font-size:12.3px;color:#800080;transform:scaleX(0.8684);left:1476.20px;top:354.00px;">242,00</span>
<span class="t" style="font-size:12.3px;color:#800080;transform:scaleX(0.8633);left:1579.20px;top:354.00px;">0,00</span>
<span class="t" style="font-size:12.3px;color:#800080;transform:scaleX(0.8684);left:1658.20px;top:354.00px;">242,00</span>
<span class="t" style="font-size:12.3px;color:#800080;transform:scaleX(0.8349);left:1700.40px;top:354.00px;width:102.52px;overflow:hidden;">Admitida con errores</span>
<span class="t" style="font-size:12.3px;color:#800080;transform:scaleX(0.8617);left:1791.40px;top:354.00px;">A-D274C674WEQSKX</span>
<span class="t" style="font-size:12.3px;color:#000;transform:scaleX(0.8604);left:45.00px;top:370.00px;">SANCHEZ SOLSONA, ORIOL</span>
<span class="t" style="font-size:12.3px;color:#000;transform:scaleX(0.8852);left:435.20px;top:370.00px;">25/000005</span>
<span class="t" style="font-size:12.3px;color:#000;transform:scaleX(0.8870);left:541.25px;top:370.00px;">25/000005</span>
<span class="t" style="font-size:12.3px;color:#000;transform:scaleX(0.8850);left:698.10px;top:370.00px;">2</span>
<span class="t" style="font-size:12.3px;color:#000;transform:scaleX(0.8770);left:714.20px;top:370.00px;">40971735H</span>
<span class="t" style="font-size:12.3px;color:#000;transform:scaleX(0.9270);left:885.40px;top:370.00px;">29/05/2025</span>
<span class="t" style="font-size:12.3px;color:#000;transform:scaleX(0.9270);left:971.40px;top:370.00px;">29/05/2025</span>
<span class="t" style="font-size:12.3px;color:#000;transform:scaleX(0.8850);left:1083.11px;top:370.00px;">1</span>
<span class="t" style="font-size:12.3px;color:#000;transform:scaleX(0.8381);left:1110.50px;top:370.00px;">ZZ</span>
<span class="t" style="font-size:12.3px;color:#000;transform:scaleX(0.8684);left:1476.20px;top:370.00px;">242,00</span>
<span class="t" style="font-size:12.3px;color:#000;transform:scaleX(0.8684);left:1567.20px;top:370.00px;">242,00</span>
<span class="t" style="font-size:12.3px;color:#000;transform:scaleX(0.8633);left:1670.20px;top:370.00px;">0,00</span>
<span class="t" style="font-size:12.3px;color:#000;transform:scaleX(0.8389);left:1700.40px;top:370.00px;width:102.04px;overflow:hidden;">Admitida sin errores</span>
<span class="t" style="font-size:12.3px;color:#000;transform:scaleX(0.8762);left:1791.40px;top:370.00px;">A-A4W85LK9DG2W9B</span>
<span class="t" style="font-size:12.3px;color:#000;transform:scaleX(0.8604);left:45.00px;top:386.00px;">SANCHEZ SOLSONA, ORIOL</span>
<span class="t" style="font-size:12.3px;color:#000;transform:scaleX(0.8852);left:435.20px;top:386.00px;">25/000006</span>
<span class="t" style="font-size:12.3px;color:#000;transform:scaleX(0.8870);left:541.25px;top:386.00px;">25/000006</span>
<span class="t" style="font-size:12.3px;color:#000;transform:scaleX(0.8850);left:698.10px;top:386.00px;">2</span>
<span class="t" style="font-size:12.3px;color:#000;transform:scaleX(0.8770);left:714.20px;top:386.00px;">40971735H</span>
<span class="t" style="font-size:12.3px;color:#000;transform:scaleX(0.9270);left:885.40px;top:386.00px;">29/05/2025</span>
<span class="t" style="font-size:12.3px;color:#000;transform:scaleX(0.9270);left:971.40px;top:386.00px;">29/05/2025</span>
<span class="t" style="font-size:12.3px;color:#000;transform:scaleX(0.8850);left:1083.11px;top:386.00px;">1</span>
<span class="t" style="font-size:12.3px;color:#000;transform:scaleX(0.8381);left:1110.50px;top:386.00px;">ZZ</span>
<span class="t" style="font-size:12.3px;color:#000;transform:scaleX(0.8684);left:1476.20px;top:386.00px;">242,00</span>
<span class="t" style="font-size:12.3px;color:#000;transform:scaleX(0.8684);left:1567.20px;top:386.00px;">242,00</span>
<span class="t" style="font-size:12.3px;color:#000;transform:scaleX(0.8633);left:1670.20px;top:386.00px;">0,00</span>
<span class="t" style="font-size:12.3px;color:#000;transform:scaleX(0.8389);left:1700.40px;top:386.00px;width:102.04px;overflow:hidden;">Admitida sin errores</span>
<span class="t" style="font-size:12.3px;color:#000;transform:scaleX(0.8708);left:1791.40px;top:386.00px;">A-Z4WC3KM82M8E7W</span>
<span class="t" style="font-size:12.3px;color:#ff0000;transform:scaleX(0.8604);left:45.00px;top:402.00px;">SANCHEZ SOLSONA, ORIOL</span>
<span class="t" style="font-size:12.3px;color:#ff0000;transform:scaleX(0.8852);left:435.20px;top:402.00px;">25/000007</span>
<span class="t" style="font-size:12.3px;color:#ff0000;transform:scaleX(0.8870);left:541.25px;top:402.00px;">25/000007</span>
<span class="t" style="font-size:12.3px;color:#ff0000;transform:scaleX(0.8850);left:698.10px;top:402.00px;">2</span>
<span class="t" style="font-size:12.3px;color:#ff0000;transform:scaleX(0.8770);left:714.20px;top:402.00px;">40971735H</span>
<span class="t" style="font-size:12.3px;color:#ff0000;transform:scaleX(0.9270);left:885.40px;top:402.00px;">29/05/2025</span>
<span class="t" style="font-size:12.3px;color:#ff0000;transform:scaleX(0.9270);left:971.40px;top:402.00px;">29/05/2025</span>
<span class="t" style="font-size:12.3px;color:#ff0000;transform:scaleX(0.8850);left:1083.11px;top:402.00px;">1</span>
<span class="t" style="font-size:12.3px;color:#ff0000;transform:scaleX(0.8381);left:1110.50px;top:402.00px;">ZZ</span>
<span class="t" style="font-size:12.3px;color:#ff0000;transform:scaleX(0.8684);left:1476.20px;top:402.00px;">242,00</span>
<span class="t" style="font-size:12.3px;color:#ff0000;transform:scaleX(0.8633);left:1579.20px;top:402.00px;">0,00</span>
<span class="t" style="font-size:12.3px;color:#ff0000;transform:scaleX(0.8684);left:1658.20px;top:402.00px;">242,00</span>
<span class="t" style="font-size:12.3px;color:#ff0000;transform:scaleX(0.8389);left:1700.40px;top:402.00px;width:102.04px;overflow:hidden;">Admitida sin errores</span>
<span class="t" style="font-size:12.3px;color:#ff0000;transform:scaleX(0.8615);left:1791.40px;top:402.00px;">A-Q5WHYTPP87GEQ5</span>
<span class="t" style="font-size:12.3px;color:#ff0000;transform:scaleX(0.8604);left:45.00px;top:418.00px;">SANCHEZ SOLSONA, ORIOL</span>
<span class="t" style="font-size:12.3px;color:#ff0000;transform:scaleX(0.8852);left:435.20px;top:418.00px;">25/000008</span>
<span class="t" style="font-size:12.3px;color:#ff0000;transform:scaleX(0.8870);left:541.25px;top:418.00px;">25/000008</span>
<span class="t" style="font-size:12.3px;color:#ff0000;transform:scaleX(0.8850);left:698.10px;top:418.00px;">2</span>
<span class="t" style="font-size:12.3px;color:#ff0000;transform:scaleX(0.8770);left:714.20px;top:418.00px;">40971735H</span>
<span class="t" style="font-size:12.3px;color:#ff0000;transform:scaleX(0.9270);left:885.40px;top:418.00px;">29/05/2025</span>
<span class="t" style="font-size:12.3px;color:#ff0000;transform:scaleX(0.9270);left:971.40px;top:418.00px;">29/05/2025</span>
<span class="t" style="font-size:12.3px;color:#ff0000;transform:scaleX(0.8850);left:1083.11px;top:418.00px;">1</span>
<span class="t" style="font-size:12.3px;color:#ff0000;transform:scaleX(0.8381);left:1110.50px;top:418.00px;">ZZ</span>
<span class="t" style="font-size:12.3px;color:#ff0000;transform:scaleX(0.8684);left:1476.20px;top:418.00px;">242,00</span>
<span class="t" style="font-size:12.3px;color:#ff0000;transform:scaleX(0.8633);left:1579.20px;top:418.00px;">0,00</span>
<span class="t" style="font-size:12.3px;color:#ff0000;transform:scaleX(0.8684);left:1658.20px;top:418.00px;">242,00</span>
<span class="t" style="font-size:12.3px;color:#ff0000;transform:scaleX(0.8389);left:1700.40px;top:418.00px;width:102.04px;overflow:hidden;">Admitida sin errores</span>
<span class="t" style="font-size:12.3px;color:#ff0000;transform:scaleX(0.8563);left:1791.40px;top:418.00px;">A-H4XLK54ZARQFE2</span>
<span class="t" style="font-size:12.3px;color:#000;font-weight:700;-webkit-text-stroke:0.3px;transform:scaleX(1.0265);left:1460.20px;top:950.00px;">1.936,00</span>
<span class="t" style="font-size:12.3px;color:#000;font-weight:700;-webkit-text-stroke:0.3px;transform:scaleX(1.0352);left:1561.40px;top:950.00px;">968,00</span>
<span class="t" style="font-size:12.3px;color:#000;font-weight:700;-webkit-text-stroke:0.3px;transform:scaleX(1.0272);left:1652.40px;top:950.00px;">968,00</span>
<span class="t" style="font-size:12px;color:#000;transform:scaleX(1.0000);left:88.30px;top:974.00px;">1</span>
<span class="t" style="font-size:12px;color:#000;transform:scaleX(0.9079);left:138.50px;top:974.00px;">de 8</span>
<span class="t" style="font-size:12px;color:#000;transform:scaleX(0.9102);left:437.30px;top:974.00px;">Estado</span>
<span class="t" style="font-size:12px;color:#000;transform:scaleX(0.9431);left:480.60px;top:974.00px;">Todas</span>
<span class="t" style="font-size:12px;color:#000;transform:scaleX(1.0032);left:637.30px;top:974.00px;">Tipo</span>
<span class="t" style="font-size:12px;color:#000;transform:scaleX(0.8786);left:796.80px;top:974.00px;">Serie</span>
<span class="t" style="font-size:10.5px;color:#fff;transform:scaleX(0.9873);left:11.10px;top:1011.00px;">SB-2025</span>
<span class="t" style="font-size:10.5px;color:#fff;transform:scaleX(0.9377);left:68.50px;top:1011.00px;">EMPRESA DE EJEMPLO</span>
<span class="t" style="font-size:10.5px;color:#fff;transform:scaleX(0.9778);left:198.25px;top:1011.00px;">PROFESIONAL 2025.01</span>
<span class="t" style="font-size:10.5px;color:#fff;transform:scaleX(0.9547);left:426.00px;top:1011.00px;">VERI*FACTU</span>
<span class="t" style="font-size:10.5px;color:#fff;transform:scaleX(1.0843);left:511.25px;top:1011.00px;">Borradores</span>
<span class="t" style="font-size:10.5px;color:#fff;transform:scaleX(1.0755);left:593.25px;top:1011.00px;">P. Fondos</span>
<span class="t" style="font-size:10.5px;color:#fff;transform:scaleX(1.0782);left:669.00px;top:1011.00px;">Cuotas</span>
<span class="t" style="font-size:10.5px;color:#fff;transform:scaleX(1.0830);left:730.00px;top:1011.00px;">Cuotas G.V.</span>
<span class="t" style="font-size:10.5px;color:#fff;transform:scaleX(1.0891);left:815.00px;top:1011.00px;">Agenda</span>
<span class="t" style="font-size:10.5px;color:#fff;transform:scaleX(0.9943);left:871.20px;top:1011.00px;">ADMINISTRADOR</span>
<span class="t" style="font-size:10.5px;color:#d7a5a7;transform:scaleX(1.0456);left:1671.40px;top:1011.00px;">Proceso en curso</span>
</body></html>
